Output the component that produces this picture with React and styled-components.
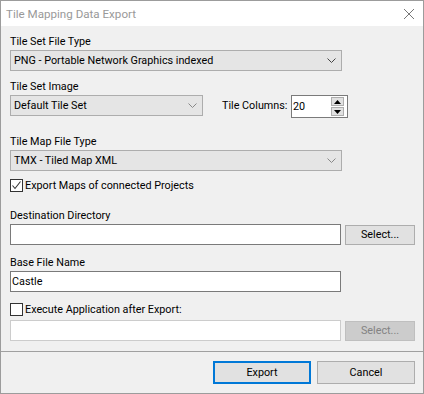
import React from "react";
import styled, { createGlobalStyle } from "styled-components";

const FONT = `Roboto, "Liberation Sans", Arial, sans-serif`;

const GlobalStyle = createGlobalStyle`
  html, body { margin: 0; padding: 0; background: #ffffff; }
  body { font-family: ${FONT}; font-size: 10.8px; color: #000; }
  * { box-sizing: border-box; }
`;

const Window = styled.div`
  width: 424px;
  height: 394px;
  border: 1px solid #9c9c9c;
  display: flex;
  flex-direction: column;
  background: #f0f0f0;
`;

const TitleBar = styled.div`
  height: 25px;
  background: #ffffff;
  display: flex;
  align-items: center;
  justify-content: space-between;
  padding: 0 9px 0 5px;
  flex: none;
`;

const Title = styled.span`
  color: #999999;
  font-size: 11.6px;
  line-height: 16px;
`;

const Body = styled.div`
  flex: 1;
  display: flex;
  flex-direction: column;
  padding: 8px 8px 10px 9px;
`;

const Label = styled.div`
  height: 16px;
  line-height: 16px;
  margin-top: ${(p) => p.$gap || 0}px;
  white-space: nowrap;
`;

const Combo = styled.div`
  width: ${(p) => p.$w}px;
  height: 21px;
  background: #e5e5e5;
  border: 1px solid #adadad;
  display: flex;
  align-items: center;
  padding-left: 3px;
  flex: none;
  margin-top: ${(p) => p.$gap || 0}px;
`;

const ComboText = styled.span`
  flex: 1;
  white-space: nowrap;
  line-height: 16px;
`;

const ChevronBox = styled.span`
  width: 17px;
  display: flex;
  justify-content: center;
  align-items: center;
  margin-right: 1px;
`;

const Row = styled.div`
  display: flex;
  align-items: ${(p) => p.$align || "center"};
  margin-top: ${(p) => p.$gap || 0}px;
`;

const InlineLabel = styled.span`
  width: 69px;
  margin-left: 19px;
  line-height: 21px;
  white-space: nowrap;
`;

const Spinner = styled.div`
  width: 57px;
  height: 23px;
  border: 1px solid #7a7a7a;
  background: #ffffff;
  display: flex;
  align-items: center;
  padding: 0 3px 0 1px;
`;

const SpinValue = styled.span`
  flex: 1;
  line-height: 16px;
`;

const SpinButtons = styled.div`
  display: flex;
  flex-direction: column;
  gap: 1px;
`;

const SpinButton = styled.div`
  width: 13px;
  height: 9px;
  background: #e1e1e1;
  border: 1px solid #adadad;
  display: flex;
  align-items: center;
  justify-content: center;
`;

const CheckRow = styled.label`
  display: flex;
  align-items: center;
  height: 15px;
  margin-top: ${(p) => p.$gap || 0}px;
  white-space: nowrap;
`;

const Box = styled.span`
  width: 13px;
  height: 13px;
  border: 1px solid #333333;
  background: #ffffff;
  display: flex;
  align-items: center;
  justify-content: center;
  margin-right: 2px;
  flex: none;
`;

const TextInput = styled.div`
  width: 331px;
  height: 21px;
  background: #ffffff;
  border: 1px solid ${(p) => (p.$disabled ? "#cccccc" : "#7a7a7a")};
  display: flex;
  align-items: center;
  padding-left: 1px;
  line-height: 16px;
  flex: none;
`;

const Button = styled.div`
  width: ${(p) => p.$w}px;
  height: ${(p) => p.$h}px;
  background: ${(p) => (p.$disabled ? "#cccccc" : "#e1e1e1")};
  color: ${(p) => (p.$disabled ? "#838383" : "#000000")};
  border: ${(p) =>
    p.$primary ? "2px solid #0078d7" : p.$disabled ? "1px solid #bfbfbf" : "1px solid #adadad"};
  display: flex;
  align-items: center;
  justify-content: center;
  line-height: 16px;
  flex: none;
`;

const FieldRow = styled.div`
  display: flex;
  align-items: center;
  gap: 4px;
`;

const Separator = styled.div`
  height: 1px;
  background: #a0a0a0;
  flex: none;
`;

const Footer = styled.div`
  display: flex;
  justify-content: flex-end;
  gap: 6px;
  padding: 9px 8px 0 0;
  height: 41px;
  flex: none;
`;

const Chevron = ({ color = "#444" }) => (
  <svg width="9" height="5" viewBox="0 0 9 5">
    <path d="M0.5 0.5 L4.5 4.5 L8.5 0.5" fill="none" stroke={color} strokeWidth="1" />
  </svg>
);

const CloseIcon = () => (
  <svg width="10" height="10" viewBox="0 0 10 10">
    <path d="M0 0 L10 10 M10 0 L0 10" stroke="#777" strokeWidth="1" />
  </svg>
);

const Check = () => (
  <svg width="11" height="11" viewBox="0 0 11 11">
    <path d="M1.5 5.5 L4 8.5 L9.5 1.5" fill="none" stroke="#333" strokeWidth="1.1" />
  </svg>
);

const TriUp = () => (
  <svg width="7" height="4" viewBox="0 0 7 4">
    <path d="M3.5 0 L7 4 L0 4 Z" fill="#000" />
  </svg>
);

const TriDown = () => (
  <svg width="7" height="4" viewBox="0 0 7 4">
    <path d="M0 0 L7 0 L3.5 4 Z" fill="#000" />
  </svg>
);

const ComboBox = ({ w, text, chevron, gap }) => (
  <Combo $w={w} $gap={gap}>
    <ComboText>{text}</ComboText>
    <ChevronBox>
      <Chevron color={chevron} />
    </ChevronBox>
  </Combo>
);

export default function App() {
  return (
    <>
      <GlobalStyle />
      <Window>
        <TitleBar>
          <Title>Tile Mapping Data Export</Title>
          <CloseIcon />
        </TitleBar>
        <Body>
          <Label>Tile Set File Type</Label>
          <ComboBox w={332} text="PNG - Portable Network Graphics indexed" chevron="#444" />

          <Label $gap={8}>Tile Set Image</Label>
          <Row $align="flex-start">
            <ComboBox w={193} text="Default Tile Set" chevron="#888" />
            <InlineLabel>Tile Columns:</InlineLabel>
            <Spinner>
              <SpinValue>20</SpinValue>
              <SpinButtons>
                <SpinButton>
                  <TriUp />
                </SpinButton>
                <SpinButton>
                  <TriDown />
                </SpinButton>
              </SpinButtons>
            </Spinner>
          </Row>

          <Label $gap={16}>Tile Map File Type</Label>
          <ComboBox w={332} text="TMX - Tiled Map XML" chevron="#888" />

          <CheckRow $gap={7}>
            <Box>
              <Check />
            </Box>
            Export Maps of connected Projects
          </CheckRow>

          <Label $gap={15}>Destination Directory</Label>
          <FieldRow>
            <TextInput />
            <Button $w={70} $h={20}>Select...</Button>
          </FieldRow>

          <Label $gap={10}>Base File Name</Label>
          <TextInput>Castle</TextInput>

          <CheckRow $gap={10}>
            <Box />
            Execute Application after Export:
          </CheckRow>
          <Row $gap={3}>
            <FieldRow>
              <TextInput $disabled />
              <Button $w={70} $h={20} $disabled>
                Select...
              </Button>
            </FieldRow>
          </Row>
        </Body>
        <Separator />
        <Footer>
          <Button $w={98} $h={23} $primary>
            Export
          </Button>
          <Button $w={98} $h={23}>
            Cancel
          </Button>
        </Footer>
      </Window>
    </>
  );
}
